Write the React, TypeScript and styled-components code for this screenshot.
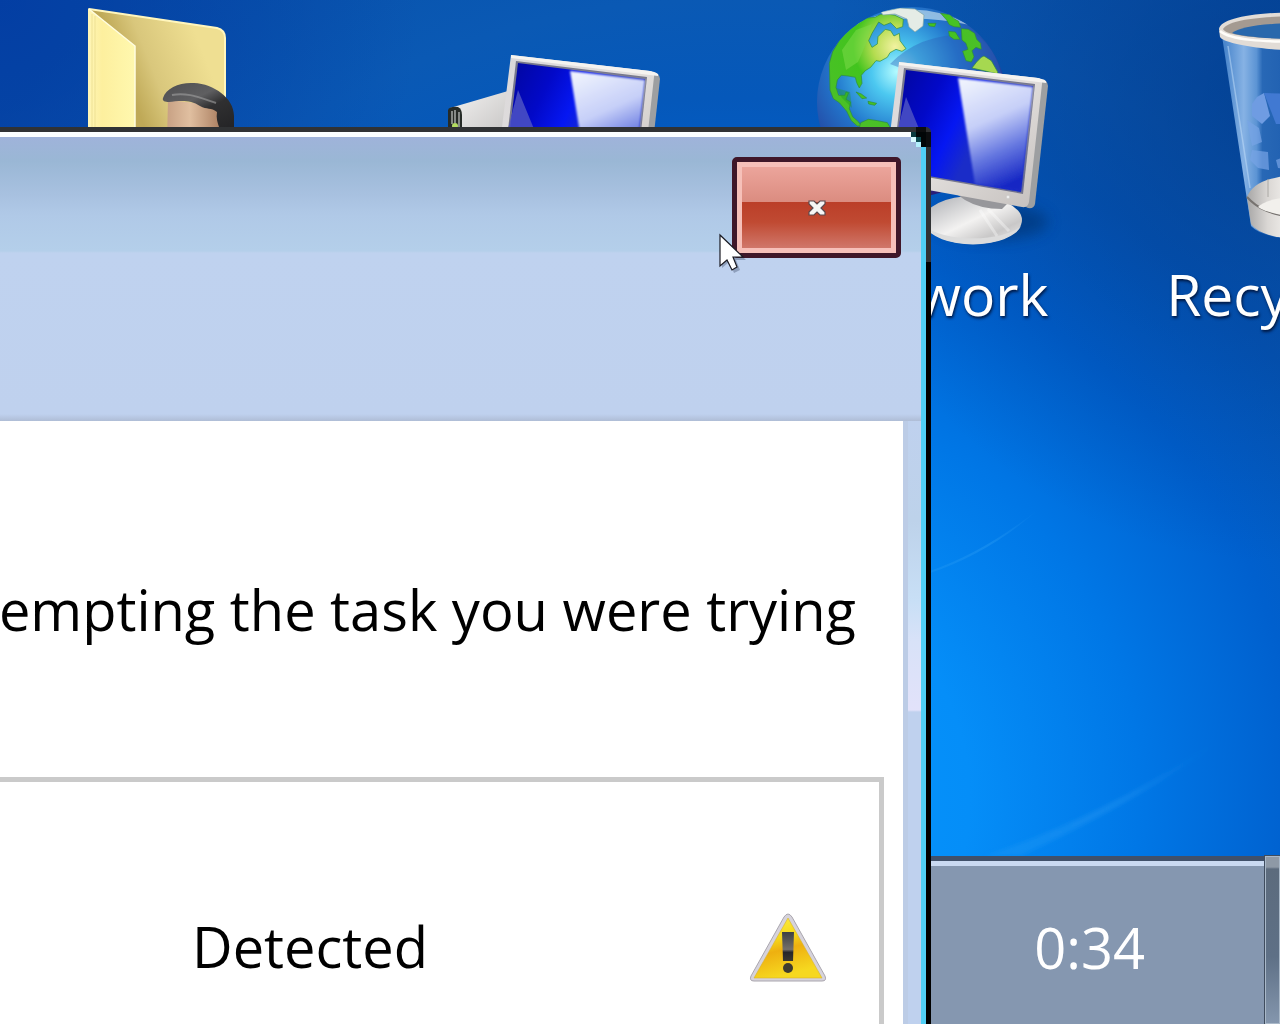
import React from "react";
import styled, { createGlobalStyle } from "styled-components";

const GlobalStyle = createGlobalStyle`
  * { box-sizing: border-box; }
  body {
    margin: 0;
    overflow: hidden;
    font-family: "Open Sans", "Noto Sans", sans-serif;
    font-size: 56px;
    line-height: 80px;
  }
`;

const Desktop = styled.div`
  position: relative;
  display: flex;
  flex-direction: column;
  height: 100vh;
  overflow: hidden;
  background:
    radial-gradient(circle at 100% 10%, rgba(0, 52, 130, 0.6), rgba(0, 60, 150, 0) 460px),
    radial-gradient(circle at 0 0, rgba(0, 50, 160, 0.6), rgba(0, 60, 160, 0) 420px),
    radial-gradient(circle at 57% 78%, #0598ff 0, #058ef8 240px, #0077e6 410px, #0060ce 570px, #0558ba 700px, #0a59b4 800px, #0850a8 1000px);
`;

const LightStreaks = styled.svg`
  position: absolute;
  right: 0;
  top: 0;
  width: 380px;
  height: 856px;
`;

const Shortcuts = styled.ul`
  display: flex;
  flex: 1;
  margin: 0 0 0 -15px;
  padding: 0;
  list-style: none;
`;

const Shortcut = styled.li`
  position: relative;
  flex: 0 0 380px;
  display: flex;
  flex-direction: column;
  align-items: center;
  color: #fff;
  font-size: 57px;
  white-space: nowrap;
  text-shadow: 1px 2px 3px rgba(0, 15, 50, 0.9);
`;

const ShortcutArt = styled.svg`
  width: 380px;
  height: 254px;
`;

const Taskbar = styled.footer`
  display: flex;
  justify-content: flex-end;
  height: 168px;
  border-top: 5px solid #40506a;
  background: linear-gradient(#c9d9f1 5px, #8597b0 5px);
  color: #fff;
`;

const Clock = styled.time`
  align-self: center;
  margin-right: 120px;
  padding-top: 8px;
`;

const ShowDesktop = styled.button`
  width: 15px;
  margin-top: -5px;
  padding: 0;
  border: 1px solid #a9b8c8;
  outline: 1px solid #3f4c5e;
  outline-offset: 0;
  background: linear-gradient(#8e99a6 10px, #5c6b7d 12px, #5e7086 60%, #8496ad);
`;

const WindowFrame = styled.section`
  position: absolute;
  top: 127px;
  right: 349px;
  bottom: 0;
  left: 0;
  display: flex;
  padding: 5px 5px 0 0;
  border-top-right-radius: 5px;
  background: linear-gradient(#303234 135px, #000 135px);
`;

const WindowBody = styled.div`
  flex: 1;
  min-width: 0;
  display: flex;
  flex-direction: column;
  border-top: 5px solid #fbfeff;
  border-right: 5px solid #50cff5;
  background: #bfd1ee;
`;

const CornerPixels = styled.svg`
  position: absolute;
  top: 0;
  right: 0;
  width: 25px;
  height: 25px;
`;

const TitleBar = styled.header`
  display: flex;
  justify-content: flex-end;
  align-items: flex-start;
  height: 284px;
  padding: 20px;
  background: linear-gradient(
    #9fb3da, #9ab7d5 24px, #a8c1e0 58px, #b0c9e7 78px, #b4cfea 114px, #bfd2ef 116px,
    #bfd1ee 277px, #afbdd6 284px
  );
`;

const CloseButton = styled.button`
  display: grid;
  place-items: center;
  width: 169px;
  height: 101px;
  padding: 0;
  border: 5px solid #3f1729;
  border-radius: 5px;
  box-shadow: inset 0 0 0 5px #f6c0b9;
  background: linear-gradient(#eea89f, #db8c80 40px, #bb3e28 40px, #c04a32 60px, #d0776a 86px);
`;

const CloseGlyph = styled.svg`
  width: 18px;
  height: 16px;
`;

const ContentRow = styled.div`
  flex: 1;
  display: grid;
  grid-template-columns: minmax(0, 1fr) 13px;
  column-gap: 5px;
  background: #bccce6;
`;

const Panel = styled.main`
  display: flex;
  flex-direction: column;
  padding: 148px 19px 0 0;
  background: #fff;
  color: #000;
`;

const EdgeGlow = styled.div`
  background: linear-gradient(#bfd1ee, #bdd2ea 100px, #c8dff6 180px, #d8e2f8 220px, #e2e2fa 289px, #bfd1ee 291px, #bfd1ee);
`;

const Message = styled.p`
  display: flex;
  justify-content: flex-end;
  margin: 0;
  padding-right: 28px;
  white-space: nowrap;
`;

const ResultBox = styled.div`
  flex: 1;
  display: flex;
  justify-content: space-between;
  align-items: flex-start;
  margin-top: 128px;
  padding: 124px 51px 0 192px;
  border: 5px solid #cacaca;
  border-width: 5px 5px 0 0;
`;

const WarningIcon = styled.svg`
  width: 80px;
  height: 72px;
  margin-top: 6px;
`;

const Pointer = styled.svg`
  position: absolute;
  top: 105px;
  right: 179px;
  width: 34px;
  height: 42px;
`;

function MonitorArt({ id }: { id: string }) {
  return (
    <g>
      <defs>
        <linearGradient id={`${id}-case`} x1="0" y1="0" x2="1" y2="1">
          <stop offset="0" stopColor="#d9d7da" />
          <stop offset="0.5" stopColor="#e2dfdd" />
          <stop offset="1" stopColor="#c5c0bd" />
        </linearGradient>
        <linearGradient id={`${id}-screen`} x1="0" y1="0" x2="0.7" y2="0.3">
          <stop offset="0" stopColor="#02069a" />
          <stop offset="0.45" stopColor="#0209c8" />
          <stop offset="0.75" stopColor="#0517f2" />
          <stop offset="1" stopColor="#1a2cc8" />
        </linearGradient>
        <linearGradient id={`${id}-glare`} x1="0.2" y1="0" x2="0.5" y2="1">
          <stop offset="0" stopColor="#eef2fd" />
          <stop offset="0.4" stopColor="#c6cff8" />
          <stop offset="0.7" stopColor="#6577e0" />
          <stop offset="1" stopColor="#1526c4" />
        </linearGradient>
        <linearGradient id={`${id}-base`} x1="0" y1="0" x2="1" y2="1">
          <stop offset="0" stopColor="#a9abb0" />
          <stop offset="0.5" stopColor="#f3f2f1" />
          <stop offset="0.75" stopColor="#c9c8c8" />
          <stop offset="1" stopColor="#f0efef" />
        </linearGradient>
        <filter id={`${id}-soft`} x="-20%" y="-20%" width="140%" height="140%">
          <feGaussianBlur stdDeviation="1" />
        </filter>
        <filter id={`${id}-shadow`} x="-30%" y="-50%" width="160%" height="200%">
          <feGaussianBlur stdDeviation="7" />
        </filter>
      </defs>
      <ellipse cx="992" cy="222" rx="56" ry="18" fill="#00306e" opacity="0.6" filter={`url(#${id}-shadow)`} />
      <ellipse cx="973" cy="220" rx="49" ry="24" fill={`url(#${id}-base)`} />
      <path d="M925 226 A49 23 0 0 0 1021 226 A52 20 0 0 1 925 226Z" fill="#dcdcdc" />
      <path d="M980 210 L997 236 M988 209 L1009 231" stroke="#fff" strokeWidth="3" opacity="0.35" />
      <path d="M951 190 L1010 201 L1002 209 Q980 209 965 200Z" fill="#97979b" />
      <path d="M1040 79 Q1048 80 1048 86 L1035 204 Q1034 209 1028 208 L1022 205Z" fill="#9d9fa1" />
      <path d="M899 62 L1038 78 Q1043 79 1042 84 L1029 202 Q1028 208 1022 207 L884 182Z" fill={`url(#${id}-case)`} />
      <path d="M899 62 L1038 78 Q1048 80 1046 83 L899 65Z" fill="#f5f3f0" />
      <path d="M904 68 L1035 84 L1023 194 L892 171Z" fill="#77788c" />
      <path d="M906 70 L1033 86 L1021 192 L894 170Z" fill={`url(#${id}-screen)`} />
      <path d="M958 78 L1033 87 L1021 191 L975 184Z" fill={`url(#${id}-glare)`} filter={`url(#${id}-soft)`} />
      <path d="M906 97 L896 136 L922 136Z" fill="#4c52c4" opacity="0.85" />
      <circle cx="1008" cy="197" r="2" fill="#eee" stroke="#cbc8c6" />
    </g>
  );
}

function FolderArt() {
  return (
    <ShortcutArt viewBox="-15 0 380 254" aria-hidden="true">
      <defs>
        <linearGradient id="folder-back" gradientUnits="userSpaceOnUse" x1="134" y1="100" x2="210" y2="70">
          <stop offset="0" stopColor="#bfa957" />
          <stop offset="0.35" stopColor="#d9c77c" />
          <stop offset="1" stopColor="#efdf92" />
        </linearGradient>
        <linearGradient id="folder-front" x1="0" y1="0" x2="1" y2="0">
          <stop offset="0" stopColor="#fff6b8" />
          <stop offset="0.3" stopColor="#fdef9e" />
          <stop offset="1" stopColor="#fff8ae" />
        </linearGradient>
        <linearGradient id="face" x1="0" y1="0" x2="1" y2="0">
          <stop offset="0" stopColor="#c8a184" />
          <stop offset="0.4" stopColor="#e0bfa0" />
          <stop offset="1" stopColor="#a5785a" />
        </linearGradient>
        <linearGradient id="hair" x1="0" y1="0" x2="0.6" y2="1">
          <stop offset="0" stopColor="#4e4e50" />
          <stop offset="0.4" stopColor="#5f5f61" />
          <stop offset="0.6" stopColor="#303031" />
          <stop offset="1" stopColor="#242426" />
        </linearGradient>
      </defs>
      <path d="M89 9 L217 28 Q225 30 225 38 L225 140 L120 140Z" fill="url(#folder-back)" />
      <path d="M89 9 L217 28 Q225 30 225 38 L225 100" fill="none" stroke="#fff6bd" strokeWidth="2" />
      <path d="M88 8 L135 46 L135 140 L88 140Z" fill="url(#folder-front)" />
      <path d="M89 9 L135 46 L135 140" fill="none" stroke="#fffde0" strokeWidth="1.5" />
      <path d="M92 14 V140 M95 16 V140" stroke="#e8da8a" strokeWidth="0.7" />
      <path d="M168 100 L222 106 L224 140 L167 140Z" fill="url(#face)" />
      <path d="M163 98 C166 88 180 82 194 83 C214 84 234 98 234 116 L234 140 L222 140 C223 131 215 124 217 112 C211 107 207 110 200 106 C190 99 178 101 169 102 C165 102 162 101 163 98Z" fill="url(#hair)" />
      <path d="M172 95 C186 92 198 97 216 103" fill="none" stroke="#a0a0a0" strokeWidth="2" opacity="0.6" />
    </ShortcutArt>
  );
}

function ComputerArt() {
  return (
    <ShortcutArt viewBox="365 0 380 254" aria-hidden="true">
      <defs>
        <linearGradient id="tower" x1="0" y1="0" x2="1" y2="1">
          <stop offset="0" stopColor="#f4f3f2" />
          <stop offset="1" stopColor="#c4c2c1" />
        </linearGradient>
      </defs>
      <path d="M450 108 L508 91 L505 140 L450 140Z" fill="url(#tower)" />
      <path d="M448 110 Q450 106 458 107 Q462 109 462 115 L462 140 L448 140Z" fill="#262b27" />
      <path d="M452 111 V124 M455 110 V123 M459 112 V135" stroke="#b9beba" strokeWidth="1.3" />
      <circle cx="455" cy="126" r="3" fill="#b4dc62" />
      <g transform="translate(-388 -7)">
        <MonitorArt id="computer" />
      </g>
    </ShortcutArt>
  );
}

function NetworkArt() {
  return (
    <ShortcutArt viewBox="745 0 380 254" aria-hidden="true">
      <defs>
        <radialGradient id="ocean" cx="0.42" cy="0.34" r="0.66">
          <stop offset="0" stopColor="#b4fbff" />
          <stop offset="0.2" stopColor="#4cc8f0" />
          <stop offset="0.5" stopColor="#2277cd" />
          <stop offset="0.8" stopColor="#2449a4" />
          <stop offset="1" stopColor="#2a1e78" />
        </radialGradient>
        <radialGradient id="land" gradientUnits="userSpaceOnUse" cx="285" cy="140" r="300">
          <stop offset="0" stopColor="#f2f2a0" />
          <stop offset="0.22" stopColor="#b4dc50" />
          <stop offset="0.42" stopColor="#42c41e" />
          <stop offset="1" stopColor="#4fbe2c" />
        </radialGradient>
        <clipPath id="globe-clip">
          <circle cx="912" cy="102" r="95" />
        </clipPath>
      </defs>
      <circle cx="912" cy="102" r="95" fill="url(#ocean)" />
      <g clipPath="url(#globe-clip)">
        <path d="M855 25 Q912 -6 970 25 Q912 12 855 25Z" fill="#d9ecf4" opacity="0.6" />
        <path d="M890 64 Q920 32 975 34 Q1000 50 1004 90 L960 90Z" fill="#2b5fb8" opacity="0.4" />
        <g transform="translate(800 0) scale(0.3333)" fill="url(#land)" stroke="#2f8c3a" strokeWidth="2" strokeLinejoin="round">
          <path d="M88 190 L98 155 L118 122 L140 95 L165 70 L190 55 L225 52 L240 44 L262 42 L285 46 L310 58 L308 80 L290 86 L272 68 L252 76 L236 66 L216 100 L206 122 L216 142 L232 132 L234 110 L256 88 L272 92 L282 108 L298 100 L300 122 L318 146 L306 154 L288 148 L270 158 L262 172 L240 184 L228 182 L212 202 L196 212 L184 226 L186 250 L178 264 L170 248 L166 232 L144 228 L124 226 L112 240 L108 262 L116 286 L134 286 L138 276 L146 278 L138 298 L152 306 L148 326 L158 350 L176 366 L184 378 L172 378 L154 362 L140 334 L118 308 L100 296 L90 270Z" />
          <path d="M178 384 L182 368 L205 358 L232 362 L262 368 L275 390 L260 410 L190 410Z" />
          <path d="M168 276 L184 282 L200 294 L186 296Z M204 304 L230 310 L224 316 L206 312Z" />
          <path d="M422 40 L450 44 L462 56 L476 64 L482 82 L462 80 L448 74 L440 60Z" />
          <path d="M446 94 L466 96 L480 118 L462 118 L448 108Z" />
          <path d="M484 86 L505 88 L524 100 L530 118 L542 130 L544 148 L528 142 L516 152 L522 170 L514 186 L498 182 L488 154 L504 148 L498 130 L486 120Z" />
          <path d="M516 204 L530 186 L544 172 L552 168 L574 182 L592 214 L594 222Z" fill="#a6d850" />
          <path d="M384 70 L408 70 L404 80 L388 78Z" />
        </g>
        <path d="M842 50 L856 30 L872 24 L866 44 L858 62 L846 70Z" fill="#7fdc4c" opacity="0.5" />
        <path d="M836 88 L850 92 L852 108 L842 98Z" fill="#1f9a2a" opacity="0.4" />
        <path d="M881 12 L900 8 L915 9 L924 15 L923 26 L915 32 L909 27 L907 19 L895 14 L883 15Z" fill="#e5ece6" stroke="#7fa6a8" strokeWidth="0.7" />
      </g>
      <MonitorArt id="network" />
    </ShortcutArt>
  );
}

function RecycleArt() {
  return (
    <ShortcutArt viewBox="1125 0 380 254" aria-hidden="true">
      <defs>
        <linearGradient id="glass" gradientUnits="userSpaceOnUse" x1="1225" y1="0" x2="1300" y2="0">
          <stop offset="0" stopColor="#4a86cc" />
          <stop offset="0.25" stopColor="#86b2e4" />
          <stop offset="0.42" stopColor="#5c94d4" />
          <stop offset="0.5" stopColor="#2868b6" />
          <stop offset="1" stopColor="#1c5cae" />
        </linearGradient>
        <linearGradient id="bin-base" x1="0" y1="0" x2="0.4" y2="0">
          <stop offset="0" stopColor="#a7a6a6" />
          <stop offset="0.5" stopColor="#dad7d4" />
          <stop offset="1" stopColor="#f1efec" />
        </linearGradient>
      </defs>
      <path d="M1222 36 L1251 226 Q1262 238 1300 240 L1345 238 L1390 36Z" fill="url(#glass)" />
      <path d="M1228 46 L1250 188" stroke="#c4e0fa" strokeWidth="1.5" opacity="0.5" />
      <path d="M1257 97 L1264 93 L1270 116 L1262 124 L1252 116 L1252 104Z" fill="#6f9ce2" />
      <path d="M1264 93 L1290 94 L1290 124 L1276 124Z" fill="#4179d2" />
      <path d="M1247 120 L1259 128 L1262 142 L1252 146Z M1252 150 L1268 152 L1269 170 L1258 168 L1250 160Z M1276 160 L1290 155 L1290 170 L1278 168Z" fill="#78a4e6" opacity="0.7" />
      <path d="M1247 197 C1252 184 1266 177 1300 174 L1350 176 L1350 240 L1300 239 C1272 238 1258 233 1251 224Z" fill="url(#bin-base)" />
      <path d="M1247 197 C1256 207 1268 215 1300 218" fill="none" stroke="#777370" strokeWidth="2" />
      <path d="M1258 207 Q1266 198 1300 196 L1300 217 Q1270 215 1258 207Z" fill="#f2f0ec" />
      <path d="M1268 179 V197" stroke="#aaa7a4" />
      <path d="M1219 29 C1221 18 1255 12 1308 12 C1365 12 1396 20 1396 32 L1395 40 C1385 50 1350 52 1305 51 C1258 50 1223 43 1220 37Z" fill="#e2dcd6" />
      <path d="M1223 29 C1228 20 1258 16 1308 16 C1360 16 1392 23 1392 32 C1385 39 1350 39 1305 39 C1262 39 1226 36 1223 29Z" fill="#a49a91" />
      <path d="M1232 33 C1242 26 1265 23 1308 23 L1330 39 C1290 40 1246 38 1232 33Z" fill="#2968ac" />
      <path d="M1220 31 C1230 40 1262 42 1310 42" fill="none" stroke="#fffdf9" strokeWidth="2.5" />
    </ShortcutArt>
  );
}

export default function App() {
  return (
    <>
      <GlobalStyle />
      <Desktop>
        <LightStreaks viewBox="900 0 380 856" aria-hidden="true">
          <defs>
            <linearGradient id="streak" x1="0" y1="1" x2="1" y2="0">
              <stop offset="0" stopColor="#38a6f6" stopOpacity="0.2" />
              <stop offset="0.5" stopColor="#38a6f6" stopOpacity="0.3" />
              <stop offset="1" stopColor="#38a6f6" stopOpacity="0" />
            </linearGradient>
            <filter id="haze">
              <feGaussianBlur stdDeviation="2" />
            </filter>
          </defs>
          <path d="M930 571 Q985 552 1040 508 Q990 553 930 573Z" fill="url(#streak)" />
          <path d="M985 856 Q1100 818 1220 740 Q1140 800 1020 856Z" fill="url(#streak)" filter="url(#haze)" />
        </LightStreaks>
        <Shortcuts>
          <Shortcut><FolderArt /></Shortcut>
          <Shortcut><ComputerArt /></Shortcut>
          <Shortcut><NetworkArt />Network</Shortcut>
          <Shortcut><RecycleArt />Recycle Bin</Shortcut>
        </Shortcuts>
        <Taskbar>
          <Clock>0:34</Clock>
          <ShowDesktop type="button" aria-label="Show desktop" />
        </Taskbar>

        <WindowFrame>
          <WindowBody>
            <TitleBar>
              <CloseButton type="button" aria-label="Close">
                <CloseGlyph viewBox="0 0 18 16" aria-hidden="true">
                  <path d="M1 1 H6 L9 4 L12 1 H17 V4 L13 8 L17 12 V15 H12 L9 12 L6 15 H1 V12 L5 8 L1 4Z" fill="#f6f6f6" stroke="#5b4a4e" strokeWidth="1.2" />
                </CloseGlyph>
              </CloseButton>
            </TitleBar>
            <ContentRow>
              <Panel>
                <Message>empting the task you were trying</Message>
                <ResultBox>
                  <span>Detected</span>
                  <WarningIcon viewBox="0 0 80 72" role="img" aria-label="Warning">
                    <defs>
                      <linearGradient id="warn-fill" x1="0" y1="0" x2="0.3" y2="1">
                        <stop offset="0" stopColor="#fff04a" />
                        <stop offset="0.4" stopColor="#f5d91c" />
                        <stop offset="0.6" stopColor="#eeb010" />
                        <stop offset="1" stopColor="#f6d820" />
                      </linearGradient>
                      <linearGradient id="warn-mark" x1="0" y1="0" x2="0" y2="1">
                        <stop offset="0" stopColor="#3c4044" />
                        <stop offset="0.6" stopColor="#74706a" />
                        <stop offset="0.7" stopColor="#26262a" />
                        <stop offset="1" stopColor="#3c3830" />
                      </linearGradient>
                    </defs>
                    <path d="M36 5 Q40 -1 44 5 L77 64 Q79 69 74 69 H6 Q1 69 3 64Z" fill="#d6d3dc" stroke="#aaa6ae" strokeWidth="1" />
                    <path d="M40 6 L74 66 H6Z" fill="url(#warn-fill)" stroke="#d8b32c" strokeWidth="0.6" />
                    <path d="M34 20 H46 L45 49 H35Z" fill="url(#warn-mark)" />
                    <circle cx="40" cy="56" r="5" fill="#3f3b30" />
                  </WarningIcon>
                </ResultBox>
              </Panel>
              <EdgeGlow />
            </ContentRow>
          </WindowBody>
          <CornerPixels viewBox="0 0 25 25" shapeRendering="crispEdges" aria-hidden="true">
            <path d="M5 5 H20 V20 H15 V15 H10 V10 H5Z" fill="#020607" />
            <path d="M5 5 H10 V10 H5Z" fill="#0a3a3e" />
            <path d="M5 10 H10 V15 H5Z" fill="#d8fbff" />
            <path d="M10 10 H15 V15 H10Z" fill="#0d4a50" />
            <path d="M10 15 H15 V20 H10Z" fill="#b2eefb" />
            <path d="M10 0 H20 V5 H10Z M20 5 H25 V20 H20Z" fill="#0c0d0e" />
          </CornerPixels>
          <Pointer viewBox="0 0 34 42" aria-hidden="true">
            <path d="M4 5 V36 L11 30 L16 41 L22 38 L18 28 H28Z" fill="#1d2a44" opacity="0.3" />
            <path d="M2 3 V34 L9 28 L14 38 L19 35 L15 25 H25Z" fill="#fff" stroke="#1a1a22" strokeWidth="1.2" />
          </Pointer>
        </WindowFrame>
      </Desktop>
    </>
  );
}
